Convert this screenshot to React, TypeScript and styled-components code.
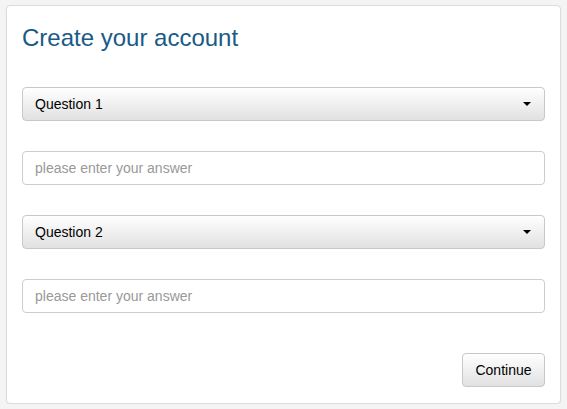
import styled, { createGlobalStyle } from "styled-components";

const GlobalStyle = createGlobalStyle`
  html, body {
    margin: 0;
    padding: 0;
    background: #f4f4f4;
    font-family: "Liberation Sans", Arial, sans-serif;
  }
`;

const Card = styled.form`
  box-sizing: border-box;
  width: 555px;
  margin: 5px 0 0 6px;
  padding: 19px 15px 16px 15px;
  background: #fff;
  border: 1px solid #dcdcdc;
  border-radius: 4px;
  box-shadow: 0 1px 2px rgba(0, 0, 0, 0.06);
  display: flex;
  flex-direction: column;
`;

const Title = styled.h1`
  margin: 0 0 36px;
  font-size: 24px;
  line-height: 26px;
  font-weight: 400;
  color: #1a5a86;
`;

const Fields = styled.div`
  display: flex;
  flex-direction: column;
  gap: 30px;
`;

const Select = styled.div`
  box-sizing: border-box;
  height: 34px;
  padding: 0 13px 0 12px;
  border: 1px solid #c8c8c8;
  border-radius: 4px;
  background: linear-gradient(to bottom, #ffffff 0%, #e1e1e1 100%);
  display: flex;
  align-items: center;
  justify-content: space-between;
  font-size: 14px;
  color: #000;
`;

const Caret = styled.span`
  width: 0;
  height: 0;
  border-left: 4px solid transparent;
  border-right: 4px solid transparent;
  border-top: 4px solid #000;
`;

const Input = styled.input`
  box-sizing: border-box;
  height: 34px;
  padding: 0 12px;
  border: 1px solid #cccccc;
  border-radius: 4px;
  font-family: "Liberation Sans", Arial, sans-serif;
  font-size: 14px;
  color: #333;
  outline: none;
  &::placeholder {
    color: #999;
  }
`;

const Footer = styled.div`
  display: flex;
  justify-content: flex-end;
  margin-top: 40px;
`;

const Button = styled.button`
  box-sizing: border-box;
  height: 34px;
  width: 83px;
  border: 1px solid #c8c8c8;
  border-radius: 4px;
  background: linear-gradient(to bottom, #ffffff 0%, #e1e1e1 100%);
  font-family: "Liberation Sans", Arial, sans-serif;
  font-size: 14px;
  color: #000;
`;

const questions = ["Question 1", "Question 2"];

export default function App() {
  return (
    <>
      <GlobalStyle />
      <Card onSubmit={(e) => e.preventDefault()}>
        <Title>Create your account</Title>
        <Fields>
          {questions.map((q) => (
            <Fields key={q}>
              <Select>
                {q}
                <Caret />
              </Select>
              <Input placeholder="please enter your answer" />
            </Fields>
          ))}
        </Fields>
        <Footer>
          <Button type="submit">Continue</Button>
        </Footer>
      </Card>
    </>
  );
}
